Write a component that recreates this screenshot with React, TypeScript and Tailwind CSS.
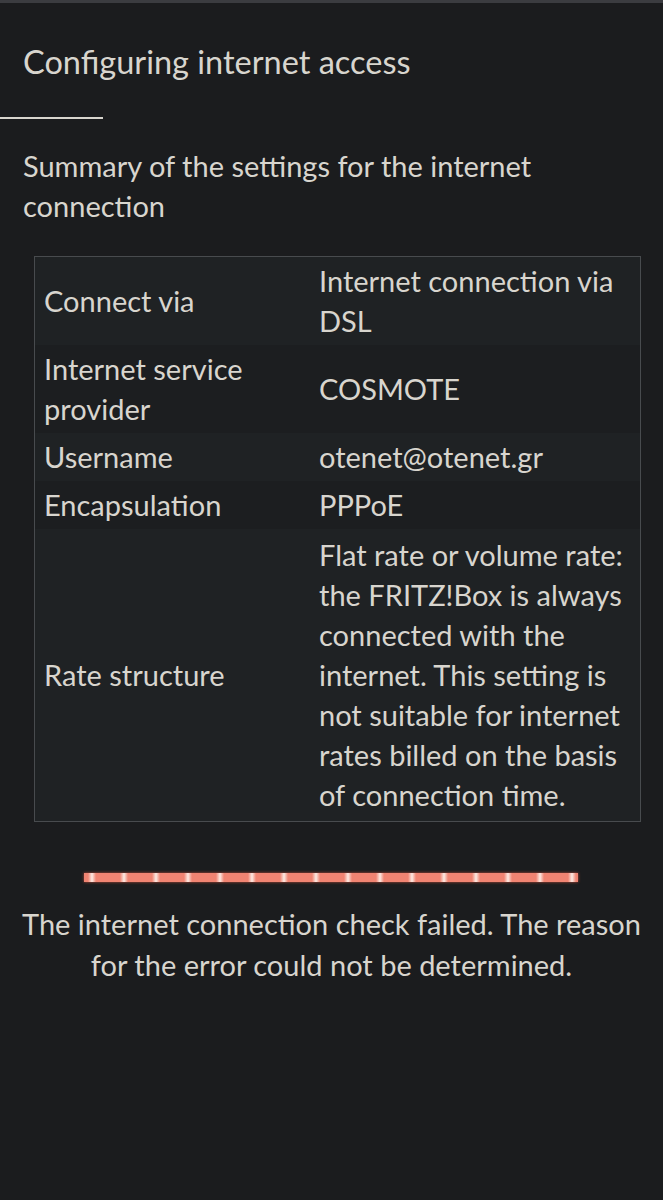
export default function App() {
  const rows: { k: string; v: string }[] = [
    { k: "Connect via", v: "Internet connection via DSL" },
    { k: "Internet service provider", v: "COSMOTE" },
    { k: "Username", v: "otenet@otenet.gr" },
    { k: "Encapsulation", v: "PPPoE" },
    {
      k: "Rate structure",
      v: "Flat rate or volume rate: the FRITZ!Box is always connected with the internet. This setting is not suitable for internet rates billed on the basis of connection time.",
    },
  ];
  return (
    <div
      className="min-h-[1200px] w-[663px] bg-[#1b1c1e] text-[#d8d5ce] flex flex-col"
      style={{ fontFamily: "Lato, 'Open Sans', sans-serif" }}
    >
      <div className="h-[3px] bg-[#3b3c40]" />
      <h1 className="px-[23px] pt-[39px] text-[32.5px] leading-[40px] font-normal">
        Configuring internet access
      </h1>
      <div className="mt-[35px] h-[2px] w-[103px] bg-[#d8d5ce]" />
      <p className="px-[23px] mt-[27px] text-[29px] leading-[40px]">
        Summary of the settings for the internet connection
      </p>
      <div className="ml-[34px] mr-[22px] mt-[30px] border border-[#484b4e]">
        <table className="w-full border-collapse text-[29px] leading-[40px]">
          <tbody>
            {rows.map((r, i) => (
              <tr key={r.k} className={i % 2 === 0 ? "bg-[#1f2224]" : "bg-[#1c1e20]"}>
                <td className={`w-[275px] pl-[9px] pr-[8px] align-middle ${i === 4 ? "py-[6px]" : "py-[4px]"}`}>{r.k}</td>
                <td className={`pl-[9px] pr-[3px] align-middle ${i === 4 ? "py-[6px]" : "py-[4px]"}`}>{r.v}</td>
              </tr>
            ))}
          </tbody>
        </table>
      </div>
      <div className="mt-[51px] ml-[84px] w-[494px] h-[9px] bg-[repeating-linear-gradient(90deg,#f08472_0px,#f08472_4px,#fdebe4_8px,#f08472_12px,#f08472_32px)] shadow-[0_0_3px_#c4503e]" />
      <p className="mt-[21px] px-[14px] text-center text-[29px] leading-[41px]">
        The internet connection check failed. The reason for the error could not be determined.
      </p>
    </div>
  );
}
